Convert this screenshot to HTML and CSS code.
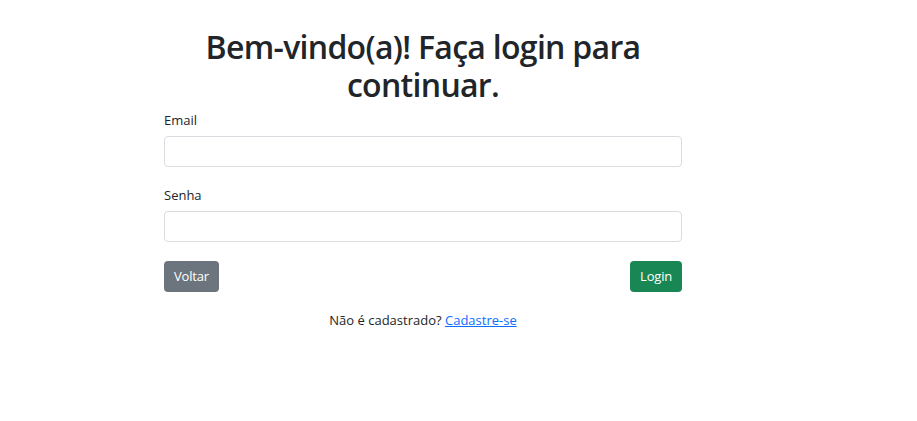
FILE: index.html
```html
<!DOCTYPE html>
<html lang="pt">
<head>
<meta charset="utf-8">
<title>Login</title>
<link rel="stylesheet" href="styles.css">
</head>
<body>
<main class="wrap">
  <h2 class="title">Bem-vindo(a)! Faça login para continuar.</h2>
  <form class="form">
    <div class="field">
      <label class="label" for="email">Email</label>
      <input class="input" id="email" type="email">
    </div>
    <div class="field">
      <label class="label" for="senha">Senha</label>
      <input class="input" id="senha" type="password">
    </div>
    <div class="actions">
      <button type="button" class="btn btn-secondary">Voltar</button>
      <button type="submit" class="btn btn-success">Login</button>
    </div>
  </form>
  <p class="signup">Não é cadastrado? <a href="#">Cadastre-se</a></p>
</main>
</body>
</html>
```
FILE: styles.css
```css
* { box-sizing: border-box; }
body {
  margin: 0;
  font-family: "Open Sans", "Noto Sans", sans-serif;
  color: #212529;
  background: #fff;
  font-size: 14px;
  line-height: 1.5;
}
.wrap {
  width: 518px;
  margin-left: 164px;
  padding-top: 28px;
}
.title {
  margin: 0 0 5px;
  font-size: 32px;
  line-height: 1.2;
  font-weight: 600;
  letter-spacing: -0.7px;
  text-align: center;
}
.form { margin: 0; }
.field { margin-bottom: 18px; }
.label {
  display: block;
  margin-bottom: 5px;
  font-size: 13px;
  line-height: 21px;
}
.input {
  display: block;
  width: 100%;
  height: 31px;
  border: 1px solid #d9dde1;
  border-radius: 4px;
  padding: 4px 8px;
  font: inherit;
}
.actions {
  display: flex;
  justify-content: space-between;
  padding-top: 1px;
}
.btn {
  height: 31px;
  border: 1px solid transparent;
  border-radius: 4px;
  padding: 0 9px;
  font: inherit;
  font-size: 13px;
  letter-spacing: -0.2px;
  color: #fff;
}
.btn-secondary { background: #6c757d; }
.btn-success { background: #198754; }
.signup {
  margin: 19px 0 0;
  text-align: center;
  font-size: 13px;
}
.signup a { color: #0d6efd; }
```
